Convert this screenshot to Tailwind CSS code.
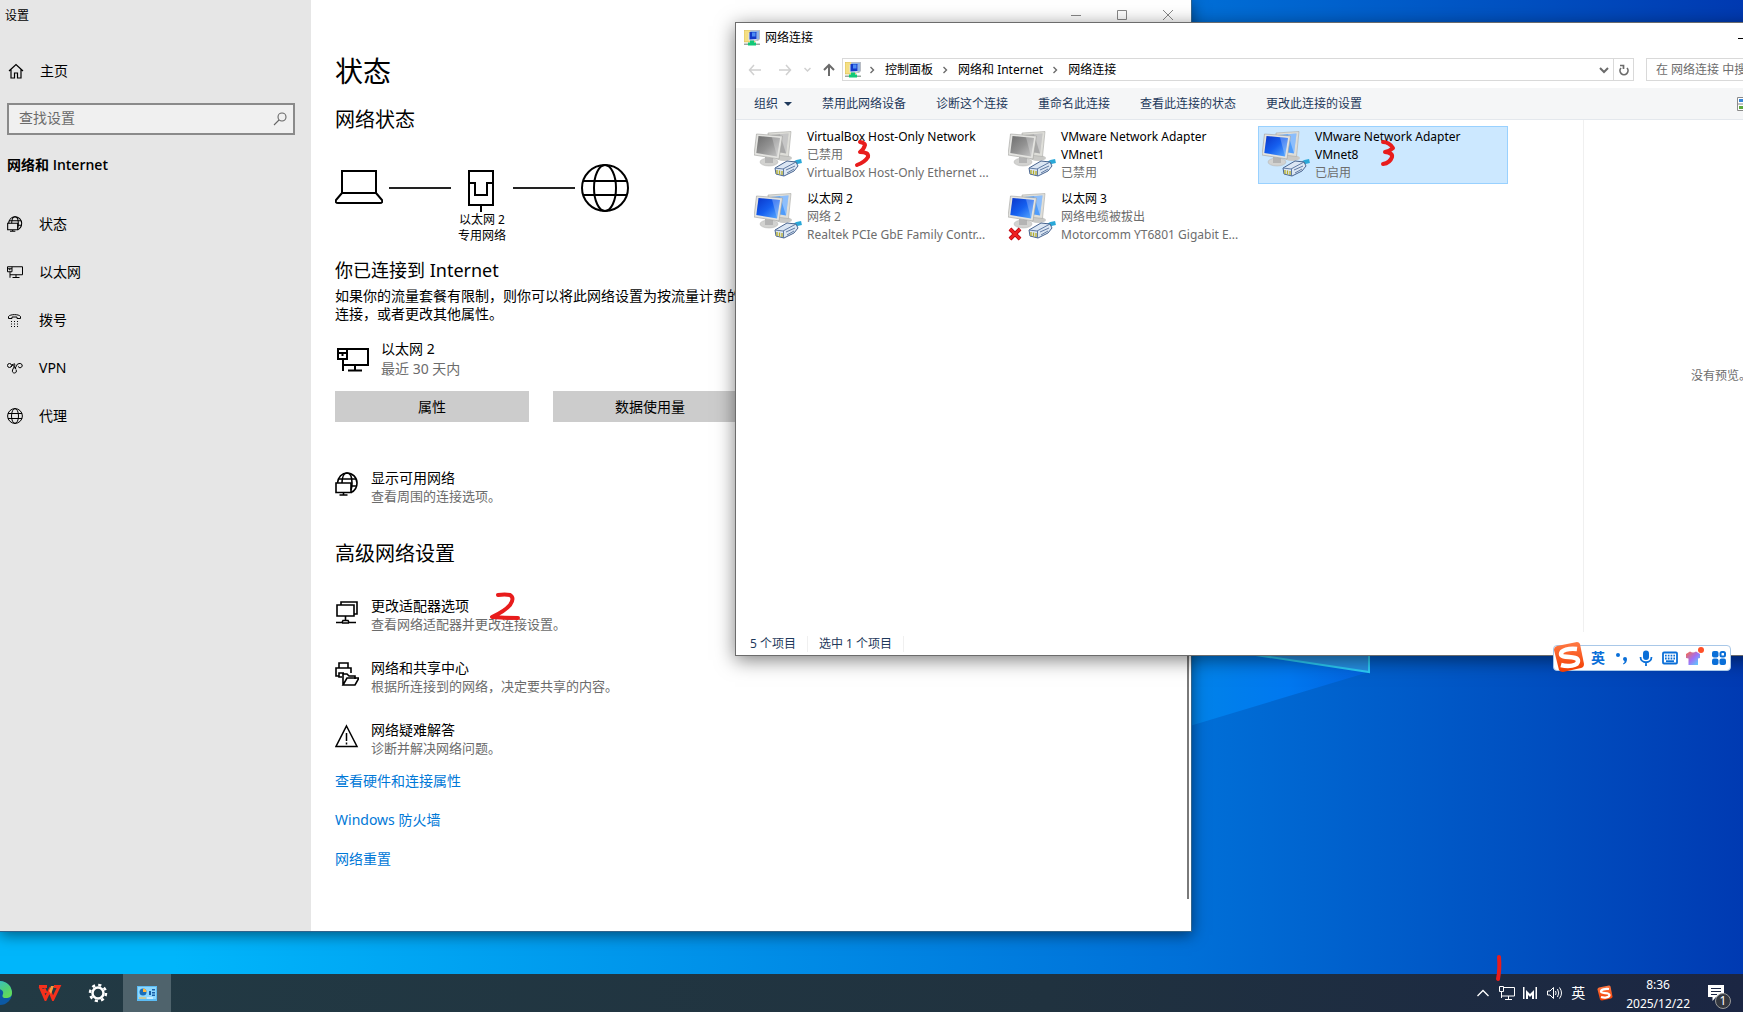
<!DOCTYPE html>
<html lang="zh-CN">
<head>
  <meta charset="UTF-8">
  <meta name="viewport" content="width=device-width, initial-scale=1.0">
  <title>网络连接</title>
  <script src="https://cdn.jsdelivr.net/npm/@tailwindcss/browser@4"></script>
</head>
<body class="h-screen overflow-hidden flex flex-col bg-[#0450c4] text-black text-xs font-['Noto_Sans','Noto_Sans_CJK_SC',sans-serif]">

  <!-- Shared icon shapes -->
  <svg class="absolute size-0" aria-hidden="true">
    <defs>
      <linearGradient id="blueScreen" x1="0" y1="0" x2="1" y2="1">
        <stop offset="0" stop-color="#0a35c8"/><stop offset=".5" stop-color="#1560f0"/><stop offset="1" stop-color="#5fb0ff"/>
      </linearGradient>
      <linearGradient id="greyScreen" x1="0" y1="0" x2="1" y2="1">
        <stop offset="0" stop-color="#6e6e6e"/><stop offset=".5" stop-color="#929292"/><stop offset="1" stop-color="#c8c8c8"/>
      </linearGradient>
      <linearGradient id="sogouRed" x1="0" y1="0" x2="0" y2="1">
        <stop offset="0" stop-color="#ff7a45"/><stop offset="1" stop-color="#f23c00"/>
      </linearGradient>
      <linearGradient id="shirt" x1="0" y1="0" x2="1" y2="1">
        <stop offset="0" stop-color="#ff6a3c"/><stop offset=".5" stop-color="#a070f5"/><stop offset="1" stop-color="#4fe0ff"/>
      </linearGradient>
      <linearGradient id="edge" x1="0" y1="0" x2="1" y2="1">
        <stop offset="0" stop-color="#2fb6e8"/><stop offset=".6" stop-color="#4fd07a"/><stop offset="1" stop-color="#6ce04a"/>
      </linearGradient>
    </defs>
    <symbol id="globe" viewBox="0 0 16 16">
      <g fill="none" stroke="currentColor"><circle cx="8" cy="8" r="7.4"/><ellipse cx="8" cy="8" rx="3.5" ry="7.4"/><path d="M1 5.500h14M1 10.500h14"/></g>
    </symbol>
    <symbol id="globe-pc" viewBox="0 0 24 24">
      <g fill="none" stroke="currentColor" stroke-width="1.600">
        <path d="M2.500 11C3 5 7 1 12 1c5.500 0 10 4.500 10 10 0 4.500-2.500 8-6 9.500"/>
        <path d="M7 11c0-6 2-10 5-10s5 4 5 10c0 3-.3 5-1 7M3.500 7h17.500M16 14h5.500"/>
        <path d="M1 11h15v9.500H1zM8.500 20.500v2.500M4.500 23h8"/>
      </g>
    </symbol>
    <symbol id="ethernet" viewBox="0 0 32 25">
      <g fill="none" stroke="currentColor" stroke-width="2">
        <path d="M10 2h21v16H6M1 2h9v10H1zM6 12v12M18 18v6M11 23.500h14"/><path d="M1 6h9M5.500 6v3"/>
      </g>
    </symbol>
    <symbol id="folder-net" viewBox="0 0 16 16">
      <path d="M0 0h6l1 1h4v11H0z" fill="#f5df83" stroke="#c9a93c" stroke-width=".5"/>
      <path d="M6 0h10v9l-2 2H6z" fill="#b9bdc4"/><path d="M7 1h8v8H7z" fill="#8fb4e8"/>
      <path d="M4.500 3h8v7.500h-8z" fill="#dfe6ee"/><path d="M5.500 2h7v7l-7 .5z" fill="#1238c8"/><path d="M8 2.500h3.500v4H8z" fill="#4c8cf4"/>
      <path d="M0 13.500h16v1.500H0z" fill="#9aa79f"/><path d="M6 10.500h4v2h2v3H4v-3h2z" fill="#12c878"/>
    </symbol>
    <symbol id="screens" viewBox="0 0 48 46">
      <ellipse cx="30" cy="27" rx="8" ry="3" fill="#c9c9c6"/>
      <path d="M14 2l23-1.500-2.500 25L14 23z" fill="#deded9" stroke="#a9a9a6" stroke-width=".6"/>
      <path d="M16 4l18.500-1.500-2.500 20L17 20z" fill="currentColor"/><path d="M26 3.300l8.500-.8-2.500 20z" fill="#fff" opacity=".35"/>
      <ellipse cx="15" cy="31" rx="9" ry="4" fill="#d2d2d0" stroke="#b0b0ae" stroke-width=".5"/><path d="M11 26l8 1v5h-8z" fill="#b4b4b4"/>
      <path d="M2.500 3L28.500 5l-3.500 23L0 24z" fill="#e3e3e0" stroke="#a0a09c" stroke-width=".6"/>
    </symbol>
    <symbol id="plug" viewBox="0 0 28 18">
      <path d="M18 5.500l5-2.500 4.500-1" fill="none" stroke="#2aa8d8" stroke-width="4"/>
      <path d="M1 9l12-7 9 1 2 4-4 5-10 5-8-2z" fill="#dbe6f3" stroke="#48648f"/>
      <path d="M1 9l8 1 13-7M9.500 10v7M12 11l9-4M13 14l7-4" fill="none" stroke="#5f7aa3"/>
      <path d="M3 11v4M5.500 11.500v4M8 12v4" stroke="#b5ad28" stroke-width="1.300"/>
    </symbol>
    <symbol id="net-on" viewBox="0 0 48 46">
      <use href="#screens" width="48" height="46" color="#4f9cfa"/>
      <path d="M4.500 5L26 7l-3 18.500L2.300 22z" fill="url(#blueScreen)"/><path d="M18 6.300L26 7l-3 18.500z" fill="#fff" opacity=".25"/>
      <use href="#plug" x="20" y="28" width="28" height="18"/>
    </symbol>
    <symbol id="net-off" viewBox="0 0 48 46">
      <use href="#screens" width="48" height="46" color="#a8a8a8"/>
      <path d="M4.500 5L26 7l-3 18.500L2.300 22z" fill="url(#greyScreen)"/><path d="M18 6.300L26 7l-3 18.500z" fill="#fff" opacity=".25"/>
      <use href="#plug" x="20" y="28" width="28" height="18"/>
    </symbol>
    <symbol id="sogou" viewBox="0 0 32 32">
      <path d="M4 5L24 1q2 0 3 2l4 20q0 3-3 4L10 31q-3 0-4-2L1 9q0-3 3-4z" fill="url(#sogouRed)"/>
      <path d="M24 8C16 7 8 9 8 13c0 5 17 1 17 7 0 5-10 6-17 4" fill="none" stroke="#fff" stroke-width="4.500"/>
    </symbol>
    <symbol id="chevron" viewBox="0 0 6 8"><path d="M1.500 1l3 3-3 3" fill="none" stroke="#6b6b6b" stroke-width="1.400"/></symbol>
  </svg>

  <!-- Desktop -->
  <main class="relative flex-1 min-h-0 overflow-hidden bg-linear-to-r from-[#00b6fb] from-10% via-[#0070d8] via-68% to-[#003ab2]">
    <svg class="absolute inset-0 w-full h-full" viewBox="0 0 1743 974" preserveAspectRatio="none">
      <defs>
        <linearGradient id="beam" x1="0" x2="1"><stop offset=".3" stop-color="#0084e8"/><stop offset=".7" stop-color="#0078f0"/><stop offset="1" stop-color="#0462de"/></linearGradient>
      </defs>
      <path d="M1100 753L1369 672 1369 600 1100 600z" fill="url(#beam)"/>
      <path d="M1190 645L1369 672 1369 640H1190z" fill="#2690e4" stroke="#2ccdf8" stroke-width="2"/>
    </svg>

    <!-- Settings window -->
    <section class="absolute left-0 top-0 bottom-[42px] w-[1192px] flex bg-white shadow-[0_3px_14px_rgba(0,0,0,0.5)] border-r border-b border-[#31648c]">
      <aside class="w-[311px] shrink-0 bg-[#e6e6e6]">
        <div class="h-8 pl-[5px] leading-8">设置</div>
        <a href="#" class="mt-[15px] flex h-12 items-center gap-4 pl-2 text-sm">
          <svg class="size-4" viewBox="0 0 16 16" fill="none" stroke="currentColor" stroke-width="1.200"><path d="M1 8L8 1.500 15 8M3 6.500V15h3.500v-5h3v5H13V6.500"/></svg>
          主页
        </a>
        <div class="mx-[7px] mt-2 mr-4 flex h-8 items-center border-2 border-[#8a8a8a] bg-[#f0f0f0] pl-2.5 pr-1.5">
          <input type="text" placeholder="查找设置" aria-label="查找设置" class="min-w-0 flex-1 bg-transparent pb-0.5 text-sm placeholder:text-[#6b6b6b] outline-none">
          <svg class="size-[14px] text-[#666]" viewBox="0 0 14 14" fill="none" stroke="currentColor" stroke-width="1.100"><circle cx="9" cy="5" r="4"/><path d="M6 8L1 13"/></svg>
        </div>
        <h2 class="mt-4 h-7 pl-[7px] text-sm leading-7 font-semibold font-['Open_Sans','Noto_Sans_CJK_SC',sans-serif]">网络和 Internet</h2>
        <nav class="mt-[21px] text-sm">
          <a href="#" class="flex h-12 items-center gap-4 pl-[7px]"><svg class="size-4"><use href="#globe-pc"/></svg>状态</a>
          <a href="#" class="flex h-12 items-center gap-4 pl-[7px]"><svg class="size-4"><use href="#ethernet"/></svg>以太网</a>
          <a href="#" class="flex h-12 items-center gap-4 pl-[7px]">
            <svg class="size-4" viewBox="0 0 16 16" fill="none" stroke="currentColor"><path d="M1.500 6.500V4.500C3 2 12 2 13.500 4.500v2h-3.500V5H5v1.500z"/><path d="M4 9.500h1m2 0h1m2 0h1M4 12h1m2 0h1m2 0h1M4 14.500h1m2 0h1m2 0h1"/></svg>
            拨号
          </a>
          <a href="#" class="flex h-12 items-center gap-4 pl-[7px]">
            <svg class="size-4" viewBox="0 0 16 16" fill="none" stroke="currentColor"><circle cx="2.500" cy="5.500" r="2"/><path d="M4 7l3-3.500q2 1-.5 4.500l-1 2M5 4l4 5M5.500 10c-.5 2 .5 3 2 3s2.500-1.500 1.500-3.500M8 8.500l2.500-4.500q3-1.500 4.500.5t-2 3.500l-2-1.500"/></svg>
            VPN
          </a>
          <a href="#" class="flex h-12 items-center gap-4 pl-[7px]"><svg class="size-4"><use href="#globe"/></svg>代理</a>
        </nav>
      </aside>

      <div class="relative flex-1 pl-6">
        <div class="flex h-[30px] justify-end">
          <button aria-label="最小化" class="flex w-[46px] items-center justify-center text-[#888]"><svg class="size-2.5" viewBox="0 0 10 10" stroke="currentColor"><path d="M0 5.500h10"/></svg></button>
          <button aria-label="最大化" class="flex w-[46px] items-center justify-center text-[#888]"><svg class="size-2.5" viewBox="0 0 10 10" fill="none" stroke="currentColor"><path d="M.5.5h9v9h-9z"/></svg></button>
          <button aria-label="关闭" class="flex w-[46px] items-center justify-center text-[#888]"><svg class="size-2.5" viewBox="0 0 10 10" stroke="currentColor"><path d="M0 0l10 10M10 0L0 10"/></svg></button>
        </div>

        <h1 class="mt-[23px] text-[28px] leading-9">状态</h1>
        <h2 class="mt-[17px] text-xl leading-7">网络状态</h2>

        <div class="mt-[30px] flex h-12 items-center gap-1.5">
          <svg class="h-12 w-12" viewBox="0 0 48 48" fill="none" stroke="currentColor" stroke-width="2"><path d="M7 29V7h34v22zM7 29L1 36q-1 3 2 3h42q3 0 2-3l-6-7"/></svg>
          <span class="h-0.5 w-[62px] bg-[#222]"></span>
          <svg class="h-12 w-[50px]" viewBox="0 0 50 48" fill="none" stroke="currentColor" stroke-width="2"><path d="M12 7h24v34H12zM12 19h6v12h12V19h6M24 41v7"/></svg>
          <span class="h-0.5 w-[62px] bg-[#222]"></span>
          <svg class="size-12" viewBox="0 0 48 48" fill="none" stroke="currentColor" stroke-width="2"><circle cx="24" cy="24" r="23"/><ellipse cx="24" cy="24" rx="11" ry="23"/><path d="M2 17h44M2 31h44"/></svg>
        </div>
        <p class="w-[294px] text-center leading-4">以太网 2<br>专用网络</p>

        <h3 class="mt-3 text-lg leading-7">你已连接到 Internet</h3>
        <p class="mt-[3px] w-[412px] text-sm leading-[18px]">如果你的流量套餐有限制，则你可以将此网络设置为按流量计费的连接，或者更改其他属性。</p>

        <div class="mt-4 flex items-center gap-3 pl-0.5 text-sm leading-5">
          <svg class="h-[25px] w-8"><use href="#ethernet"/></svg>
          <p>以太网 2<br><span class="text-[#6b6b6b]">最近 30 天内</span></p>
        </div>
        <div class="mt-3 flex gap-6 text-sm">
          <button class="h-[31px] w-[194px] bg-[#ccc]">属性</button>
          <button class="h-[31px] w-[194px] bg-[#ccc]">数据使用量</button>
        </div>

        <a href="#" class="mt-[47px] flex items-start gap-3">
          <svg class="mt-[3px] size-6"><use href="#globe-pc"/></svg>
          <span class="flex flex-col text-sm leading-[18px]">显示可用网络<span class="text-[13px] text-[#6b6b6b]">查看周围的连接选项。</span></span>
        </a>

        <h2 class="mt-[35px] text-xl leading-7">高级网络设置</h2>

        <div class="mt-[29px] flex flex-col gap-[26px]">
          <a href="#" class="flex items-start gap-3">
            <svg class="mt-[3px] size-6" viewBox="0 0 24 24" fill="none" stroke="currentColor" stroke-width="1.600"><path d="M6 5V2h16v12h-3M2 5h17v11H2zM10.500 16v4M1 22.500h6l1-2h5l1 2h7M7 23h7"/></svg>
            <span class="flex flex-col text-sm leading-[18px]">更改适配器选项<span class="text-[13px] text-[#6b6b6b]">查看网络适配器并更改连接设置。</span></span>
          </a>
          <a href="#" class="flex items-start gap-3">
            <svg class="mt-[3px] size-6" viewBox="0 0 24 24" fill="none" stroke="currentColor" stroke-width="1.600"><path d="M4 6V1h9v5M4 14H1V6h15v5M4 14v-3h5M4 11v4h3M8 23V12h4l2 2h6v3M8 23l4-7h12l-4 7z"/></svg>
            <span class="flex flex-col text-sm leading-[18px]">网络和共享中心<span class="text-[13px] text-[#6b6b6b]">根据所连接到的网络，决定要共享的内容。</span></span>
          </a>
          <a href="#" class="flex items-start gap-3">
            <svg class="mt-[3px] size-6" viewBox="0 0 24 24" fill="none" stroke="currentColor" stroke-width="1.500"><path d="M11.500 2L22 22.500H1zM11.500 9v8M11.500 18.500v2"/></svg>
            <span class="flex flex-col text-sm leading-[18px]">网络疑难解答<span class="text-[13px] text-[#6b6b6b]">诊断并解决网络问题。</span></span>
          </a>
        </div>

        <div class="mt-[14px] flex flex-col items-start gap-[19px] text-sm leading-5 text-[#0078d7]">
          <a href="#">查看硬件和连接属性</a>
          <a href="#">Windows 防火墙</a>
          <a href="#">网络重置</a>
        </div>

        <!-- Scroll thumb -->
        <div class="absolute right-0.5 top-12 bottom-8 w-0.5 bg-[#7a7a7a]"></div>
      </div>
    </section>

    <!-- Network connections window -->
    <section class="absolute left-[735px] -right-[116px] top-[22px] h-[634px] flex flex-col border border-[#6c6c6c] bg-white shadow-[0_4px_18px_rgba(0,0,0,0.5)]">
      <header class="flex h-[30px] items-center">
        <svg class="ml-2 size-4"><use href="#folder-net"/></svg>
        <h1 class="ml-[5px] flex-1">网络连接</h1>
        <button aria-label="最小化" class="flex h-full w-[46px] items-center justify-center"><svg class="size-2.5" viewBox="0 0 10 10" stroke="currentColor"><path d="M0 5.500h10"/></svg></button>
        <button aria-label="最大化" class="flex h-full w-[46px] items-center justify-center"><svg class="size-2.5" viewBox="0 0 10 10" fill="none" stroke="currentColor"><path d="M.5.5h9v9h-9z"/></svg></button>
        <button aria-label="关闭" class="flex h-full w-[46px] items-center justify-center"><svg class="size-2.5" viewBox="0 0 10 10" stroke="currentColor"><path d="M0 0l10 10M10 0L0 10"/></svg></button>
      </header>

      <!-- Address row -->
      <div class="flex h-[35px] items-center pb-0.5 pl-3">
        <button aria-label="后退" class="text-[#d0d0d0]"><svg class="h-3 w-[14px]" viewBox="0 0 14 12" fill="none" stroke="currentColor" stroke-width="1.500"><path d="M13 6H2M6 1L1.500 6 6 11"/></svg></button>
        <button aria-label="前进" class="ml-4 text-[#d0d0d0]"><svg class="h-3 w-[14px]" viewBox="0 0 14 12" fill="none" stroke="currentColor" stroke-width="1.500"><path d="M1 6h11M8 1l4.500 5L8 11"/></svg></button>
        <button aria-label="最近浏览的位置" class="ml-3 text-[#d0d0d0]"><svg class="h-1.5 w-[7px]" viewBox="0 0 7 6" fill="none" stroke="currentColor" stroke-width="1.500"><path d="M.5 1l3 3 3-3"/></svg></button>
        <button aria-label="向上" class="ml-3 text-[#6b6b6b]"><svg class="h-[13px] w-3" viewBox="0 0 12 13" fill="none" stroke="currentColor" stroke-width="2"><path d="M6 13V2M1 7l5-5 5 5"/></svg></button>
        <div class="ml-[7px] flex h-[23px] w-[792px] items-center border border-[#d9d9d9]">
          <svg class="ml-0.5 size-4"><use href="#folder-net"/></svg>
          <svg class="ml-2 h-2 w-1.5"><use href="#chevron"/></svg>
          <a href="#" class="ml-2.5">控制面板</a>
          <svg class="ml-[9px] h-2 w-1.5"><use href="#chevron"/></svg>
          <a href="#" class="ml-2.5">网络和 Internet</a>
          <svg class="ml-[9px] h-2 w-1.5"><use href="#chevron"/></svg>
          <a href="#" class="ml-2.5">网络连接</a>
          <button aria-label="历史记录" class="ml-auto mr-1 text-[#6b6b6b]"><svg class="h-2 w-2.5" viewBox="0 0 10 8" fill="none" stroke="currentColor" stroke-width="2"><path d="M1 2l4 4 4-4"/></svg></button>
          <button aria-label="刷新" class="flex h-full w-5 items-center justify-center border-l border-[#d9d9d9] text-[#6b6b6b]"><svg class="h-3 w-2.5" viewBox="0 0 10 12" fill="none" stroke="currentColor" stroke-width="1.700"><path d="M2 4A4 4 0 1 0 8 4M1 1.500h3.500V5"/></svg></button>
        </div>
        <input type="text" placeholder="在 网络连接 中搜索" aria-label="在 网络连接 中搜索" class="ml-3 mr-3 h-[23px] min-w-0 flex-1 border border-[#d9d9d9] pl-[9px] placeholder:text-[#6d6d6d]">
      </div>

      <!-- Command bar -->
      <div class="flex h-8 shrink-0 items-center gap-[30px] border-b border-[#e4e8ed] bg-[#f5f6f7] pl-[18px] text-[#1e395b]">
        <button class="flex items-center gap-1.5">组织<svg class="h-1 w-2" viewBox="0 0 8 4" fill="currentColor"><path d="M0 0h8L4 4z"/></svg></button>
        <button>禁用此网络设备</button>
        <button>诊断这个连接</button>
        <button>重命名此连接</button>
        <button>查看此连接的状态</button>
        <button>更改此连接的设置</button>
        <button aria-label="更改视图" class="ml-auto mr-[105px]"><svg class="h-[14px] w-4" viewBox="0 0 16 14"><path d="M.5.5h15v13H.5zM.5 7h15M8 0v14" fill="#fff" stroke="#8a8a8a"/><path d="M2 2h4v3H2zM10 2h4v3h-4z" fill="#3a86d8"/><path d="M2 9h4v3H2z" fill="#5ca83c"/><path d="M10 9h4v3h-4z" fill="#d88a3a"/></svg></button>
      </div>

      <div class="flex min-h-0 flex-1">
        <ul class="grid flex-1 grid-cols-[repeat(3,250px)] content-start gap-1 pl-3.5 pt-1.5 leading-[18px]">
          <li class="flex h-[58px] gap-[5px] border border-transparent pl-[3px] pt-px">
            <svg class="mt-[3px] h-[46px] w-12 shrink-0"><use href="#net-off"/></svg>
            <div class="min-w-0 flex-1 pr-1 text-[#6d6d6d]"><p class="text-black">VirtualBox Host-Only Network</p><p>已禁用</p><p>VirtualBox Host-Only Ethernet ...</p></div>
          </li>
          <li class="flex h-[58px] gap-[5px] border border-transparent pl-[3px] pt-px">
            <svg class="mt-[3px] h-[46px] w-12 shrink-0"><use href="#net-off"/></svg>
            <div class="min-w-0 flex-1 pr-1 text-[#6d6d6d]"><p class="text-black">VMware Network Adapter<br>VMnet1</p><p>已禁用</p></div>
          </li>
          <li class="flex h-[58px] gap-[5px] border border-[#99d1ff] bg-[#cce8ff] pl-[3px] pt-px">
            <svg class="mt-[3px] h-[46px] w-12 shrink-0"><use href="#net-on"/></svg>
            <div class="min-w-0 flex-1 pr-1 text-[#6d6d6d]"><p class="text-black">VMware Network Adapter<br>VMnet8</p><p>已启用</p></div>
          </li>
          <li class="flex h-[58px] gap-[5px] border border-transparent pl-[3px] pt-px">
            <svg class="mt-[3px] h-[46px] w-12 shrink-0"><use href="#net-on"/></svg>
            <div class="min-w-0 flex-1 pr-1 text-[#6d6d6d]"><p class="text-black">以太网 2</p><p>网络 2</p><p>Realtek PCIe GbE Family Contr...</p></div>
          </li>
          <li class="relative flex h-[58px] gap-[5px] border border-transparent pl-[3px] pt-px">
            <svg class="mt-[3px] h-[46px] w-12 shrink-0"><use href="#net-on"/></svg>
            <svg class="absolute bottom-1 left-[3px] size-[14px]" viewBox="0 0 14 14"><path d="M2 2l10 10M12 2L2 12" stroke="#b00010" stroke-width="4"/><path d="M2 2l10 10M12 2L2 12" stroke="#ee2020" stroke-width="2.500"/></svg>
            <div class="min-w-0 flex-1 pr-1 text-[#6d6d6d]"><p class="text-black">以太网 3</p><p>网络电缆被拔出</p><p>Motorcomm YT6801 Gigabit E...</p></div>
          </li>
        </ul>
        <div class="flex w-[275px] shrink-0 justify-center border-l border-[#f0f0f0] pt-[248px] text-[#6d6d6d]">没有预览。</div>
      </div>

      <footer class="flex h-[23px] shrink-0 items-center pl-3.5 text-[#1e395b]">
        <span class="border-r border-[#f0f0f0] pr-[11px]">5 个项目</span>
        <span class="border-r border-[#f0f0f0] px-[11px]">选中 1 个项目</span>
      </footer>
    </section>

    <!-- Input method bar -->
    <div class="absolute right-3 top-[645px] flex h-[26px] items-center gap-2 rounded-sm border border-[#a9c8e8] bg-white pr-1 pl-9 text-[#0a6fd8]">
      <svg class="absolute -left-px -top-[5px] size-8"><use href="#sogou"/></svg>
      <span class="w-4 text-center text-sm font-bold">英</span>
      <svg class="size-4" viewBox="0 0 16 16" fill="currentColor"><circle cx="4" cy="5" r="2"/><path d="M9 9a2 2 0 1 1 4 0q0 4-3.500 5.500L9 13.500q2-1 1.500-2.500Q9 10.500 9 9z"/></svg>
      <svg class="size-4" viewBox="0 0 16 16" fill="none" stroke="currentColor" stroke-width="1.800"><rect x="5" y=".5" width="6" height="9.500" rx="3" fill="currentColor" stroke="none"/><path d="M2.500 7c0 7 11 7 11 0M8 12v4"/></svg>
      <svg class="size-4" viewBox="0 0 16 16" fill="none" stroke="currentColor" stroke-width="1.800"><rect x="1" y="2.500" width="14" height="11" rx="1"/><path d="M3 5.700h10M3 8.500h10" stroke-dasharray="1.700 1.100"/><path d="M4 11.200h8"/></svg>
      <svg class="h-5 w-[18px] -mt-1" viewBox="0 0 18 20"><path d="M0 8l4-2.500q3 2 6 0l4 2.500v4l-2 .5V19H2.500v-6.500L0 12z" fill="url(#shirt)"/><circle cx="15" cy="4" r="3" fill="#ff5028"/></svg>
      <svg class="size-[14px]" viewBox="0 0 14 14" fill="currentColor"><rect width="6.500" height="6.500" rx="2"/><rect y="7.500" width="6.500" height="6.500" rx="2"/><rect x="7.500" y="7.500" width="6.500" height="6.500" rx="2"/><rect x="8.500" y="1" width="4.500" height="4.500" rx="1.500" fill="none" stroke="currentColor" stroke-width="2"/></svg>
    </div>
  </main>

  <!-- Taskbar -->
  <footer class="flex h-[38px] shrink-0 items-stretch bg-linear-to-r from-[#223a44] via-[#20323f] via-60% to-[#1b2643] text-white">
    <button aria-label="Microsoft Edge" class="-ml-3 flex items-center">
      <svg class="size-6" viewBox="0 0 24 24"><circle cx="12" cy="12" r="12" fill="#0c59a4"/><path d="M0 12a12 12 0 0 1 24 0c0 4-3 5-6 5-4 0-4-2-3-4 1-3-2-5-4-5C5 8 2 10 0 12z" fill="url(#edge)"/></svg>
    </button>
    <button aria-label="WPS Office" class="ml-[14px] flex w-12 items-center justify-center">
      <svg class="h-4 w-6" viewBox="0 0 24 16"><path d="M1 1.500h8M2 1.500L7.500 14l4-8.500L15 14l6-12.500h-5M6 3.500l2 4.500" fill="none" stroke="#f5301c" stroke-width="3"/><path d="M11 6l2-5h3l-3 8z" fill="#ff9a3c"/></svg>
    </button>
    <button aria-label="设置" class="flex w-12 items-center justify-center">
      <svg class="size-5" viewBox="0 0 20 20" fill="none" stroke="currentColor"><circle cx="10" cy="10" r="5.500" stroke-width="2.500"/><circle cx="10" cy="10" r="8" stroke-width="2.500" stroke-dasharray="3.140 3.140"/></svg>
    </button>
    <button aria-label="控制面板" class="ml-px flex w-12 items-center justify-center bg-[#4f636c]">
      <svg class="h-[15px] w-5" viewBox="0 0 20 15"><path d="M0 0h20v15H0z" fill="#5bbcf5"/><path d="M1 1h18v12H1z" fill="#8cd8ff"/><circle cx="6" cy="6" r="3.500" fill="#1a6db8"/><path d="M6 6V2.500A3.500 3.500 0 0 1 9.500 6z" fill="#ffb83c"/><path d="M12 5h2v4h-2zM15 3h3v1.500h-3zM15 6h3v1.500h-3zM15 8.500h3V10h-3z" fill="#1a5fa8"/><path d="M2 12h7" stroke="#ffb83c"/><path d="M10 12h6" stroke="#fff"/></svg>
    </button>

    <div class="ml-auto flex items-center pr-3">
      <button aria-label="显示隐藏的图标"><svg class="h-2 w-3" viewBox="0 0 12 8" fill="none" stroke="currentColor" stroke-width="1.300"><path d="M.5 7L6 1.500 11.500 7"/></svg></button>
      <svg class="ml-2.5 h-[14px] w-4" viewBox="0 0 16 14" fill="none" stroke="currentColor"><path d="M5 1.500h10.500v8.500H3M.5.5h4v5h-4zM2.500 5.500V12M9.500 10v3M6 13.500h7"/></svg>
      <svg class="ml-2 h-3 w-[14px]" viewBox="0 0 14 12" fill="currentColor"><path d="M0 0h1.500v12H0zM3 3l4 4 4-4v9H9V8l-2 2-2-2v4H3zM12.500 0H14v12h-1.500z"/></svg>
      <svg class="ml-2.5 h-[14px] w-4" viewBox="0 0 16 14" fill="none" stroke="currentColor"><path d="M.5 5h2.500l3.500-3.500v11L3 9H.5zM8.500 5q1.200 2 0 4M10.500 3q2.500 4 0 8M12.500 1.500q4 5.500 0 11"/></svg>
      <span class="ml-2 text-sm">英</span>
      <svg class="ml-3 size-4"><use href="#sogou"/></svg>
      <div class="ml-[13px] pt-px text-center leading-[19px]">8:36<br>2025/12/22</div>
      <button aria-label="通知" class="relative ml-[18px]">
        <svg class="h-4 w-[23px]" viewBox="0 0 23 16"><path d="M0 0h16v12H8l-3.500 4v-4H0z" fill="#fff"/><path d="M3 3.500h10M3 6.500h10M3 9.500h6" stroke="#1b2643"/></svg>
        <span class="absolute right-0 top-2 flex size-4 items-center justify-center rounded-full border border-[#9a9a9a] bg-[#33373f] leading-none">1</span>
      </button>
    </div>
  </footer>

  <!-- Pen marks over the screen -->
  <div class="pointer-events-none fixed inset-0">
    <svg class="absolute left-[489px] top-[592px] h-[30px] w-8" viewBox="0 0 32 30" fill="none" stroke="#e81c1c" stroke-width="4" stroke-linecap="round" stroke-linejoin="round"><path d="M9 3q7-1 12 0 5 3 0 10-5 6-18 12 12 1 26 1"/></svg>
    <svg class="absolute left-[854px] top-[139px] h-[30px] w-[18px]" viewBox="0 0 18 30" fill="none" stroke="#e81c1c" stroke-width="4" stroke-linecap="round" stroke-linejoin="round"><path d="M6 3q5 1 5 3-1 4-5 7 9 0 8 5-3 5-11 8"/></svg>
    <svg class="absolute left-[1379px] top-[139px] h-[30px] w-[18px]" viewBox="0 0 18 30" fill="none" stroke="#e81c1c" stroke-width="4" stroke-linecap="round" stroke-linejoin="round"><path d="M4 3q6 0 10 6-3 3-8 4 8 1 7 5-2 6-9 7"/></svg>
    <svg class="absolute left-[1494px] top-[954px] h-[30px] w-[10px]" viewBox="0 0 10 30" fill="none" stroke="#e81c1c" stroke-width="4" stroke-linecap="round"><path d="M5 3q1 12-1 22"/></svg>
  </div>

</body>
</html>
